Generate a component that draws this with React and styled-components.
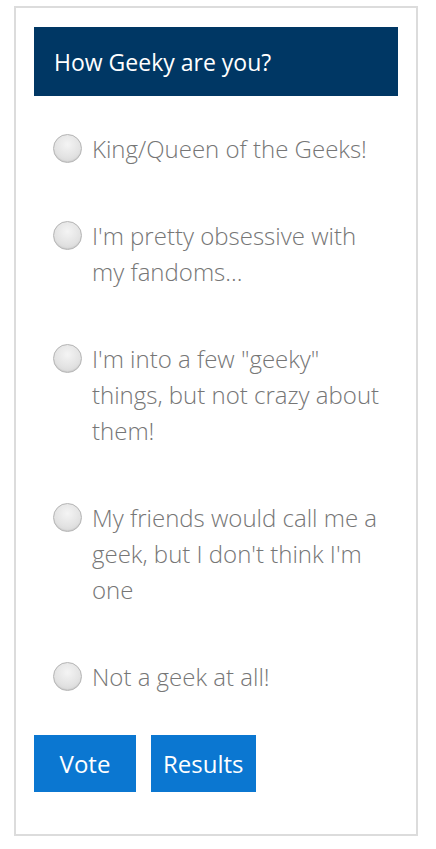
import React from 'react'
import styled, { createGlobalStyle } from 'styled-components'

const GlobalStyle = createGlobalStyle`
  body {
    margin: 0;
    background: #fff;
    font-family: 'Open Sans', 'Liberation Sans', sans-serif;
  }
`
const PollCard = styled.div`
  box-sizing: border-box;
  width: 404px;
  margin: 6px 0 14px 14px;
  border: 2px solid #dcdcdc;
  padding: 19px 18px 42px 18px;
  background: #fff;
`
const PollTitle = styled.div`
  background: #003764;
  color: #fff;
  height: 69px;
  display: flex;
  align-items: center;
  padding-left: 20px;
  font-size: 23px;
  font-weight: 400;
`
const OptionList = styled.div`
  display: flex;
  flex-direction: column;
  gap: 51px;
  padding: 35px 12px 40px 19px;
`
const Option = styled.label`
  display: flex;
  align-items: flex-start;
  gap: 10px;
  cursor: pointer;
`
const Radio = styled.span`
  flex: 0 0 auto;
  width: 27px;
  height: 27px;
  margin-top: 3px;
  border-radius: 50%;
  border: 1px solid #b4b4b4;
  background: radial-gradient(circle at 50% 35%, #f4f4f4 0%, #e2e2e2 60%, #cfcfcf 100%);
  box-shadow: inset 0 -1px 1px rgba(0,0,0,0.06);
`
const OptionText = styled.span`
  font-size: 24px;
  font-weight: 300;
  line-height: 36px;
  color: #767676;
`
const Actions = styled.div`
  display: flex;
  gap: 15px;
`
const Button = styled.button`
  min-width: 102px;
  height: 57px;
  padding: 0 12px;
  border: 0;
  background: #0b77d1;
  color: #fff;
  font-family: 'Open Sans', 'Liberation Sans', sans-serif;
  font-size: 24px;
  font-weight: 400;
  cursor: pointer;
`

const options = [
  'King/Queen of the Geeks!',
  "I'm pretty obsessive with my fandoms...",
  'I\'m into a few "geeky" things, but not crazy about them!',
  "My friends would call me a geek, but I don't think I'm one",
  'Not a geek at all!'
]

export default function App () {
  return (
    <>
      <GlobalStyle />
      <PollCard>
        <PollTitle>How Geeky are you?</PollTitle>
        <OptionList>
          {options.map(opt => (
            <Option key={opt}>
              <Radio />
              <OptionText>{opt}</OptionText>
            </Option>
          ))}
        </OptionList>
        <Actions>
          <Button>Vote</Button>
          <Button>Results</Button>
        </Actions>
      </PollCard>
    </>
  )
}
